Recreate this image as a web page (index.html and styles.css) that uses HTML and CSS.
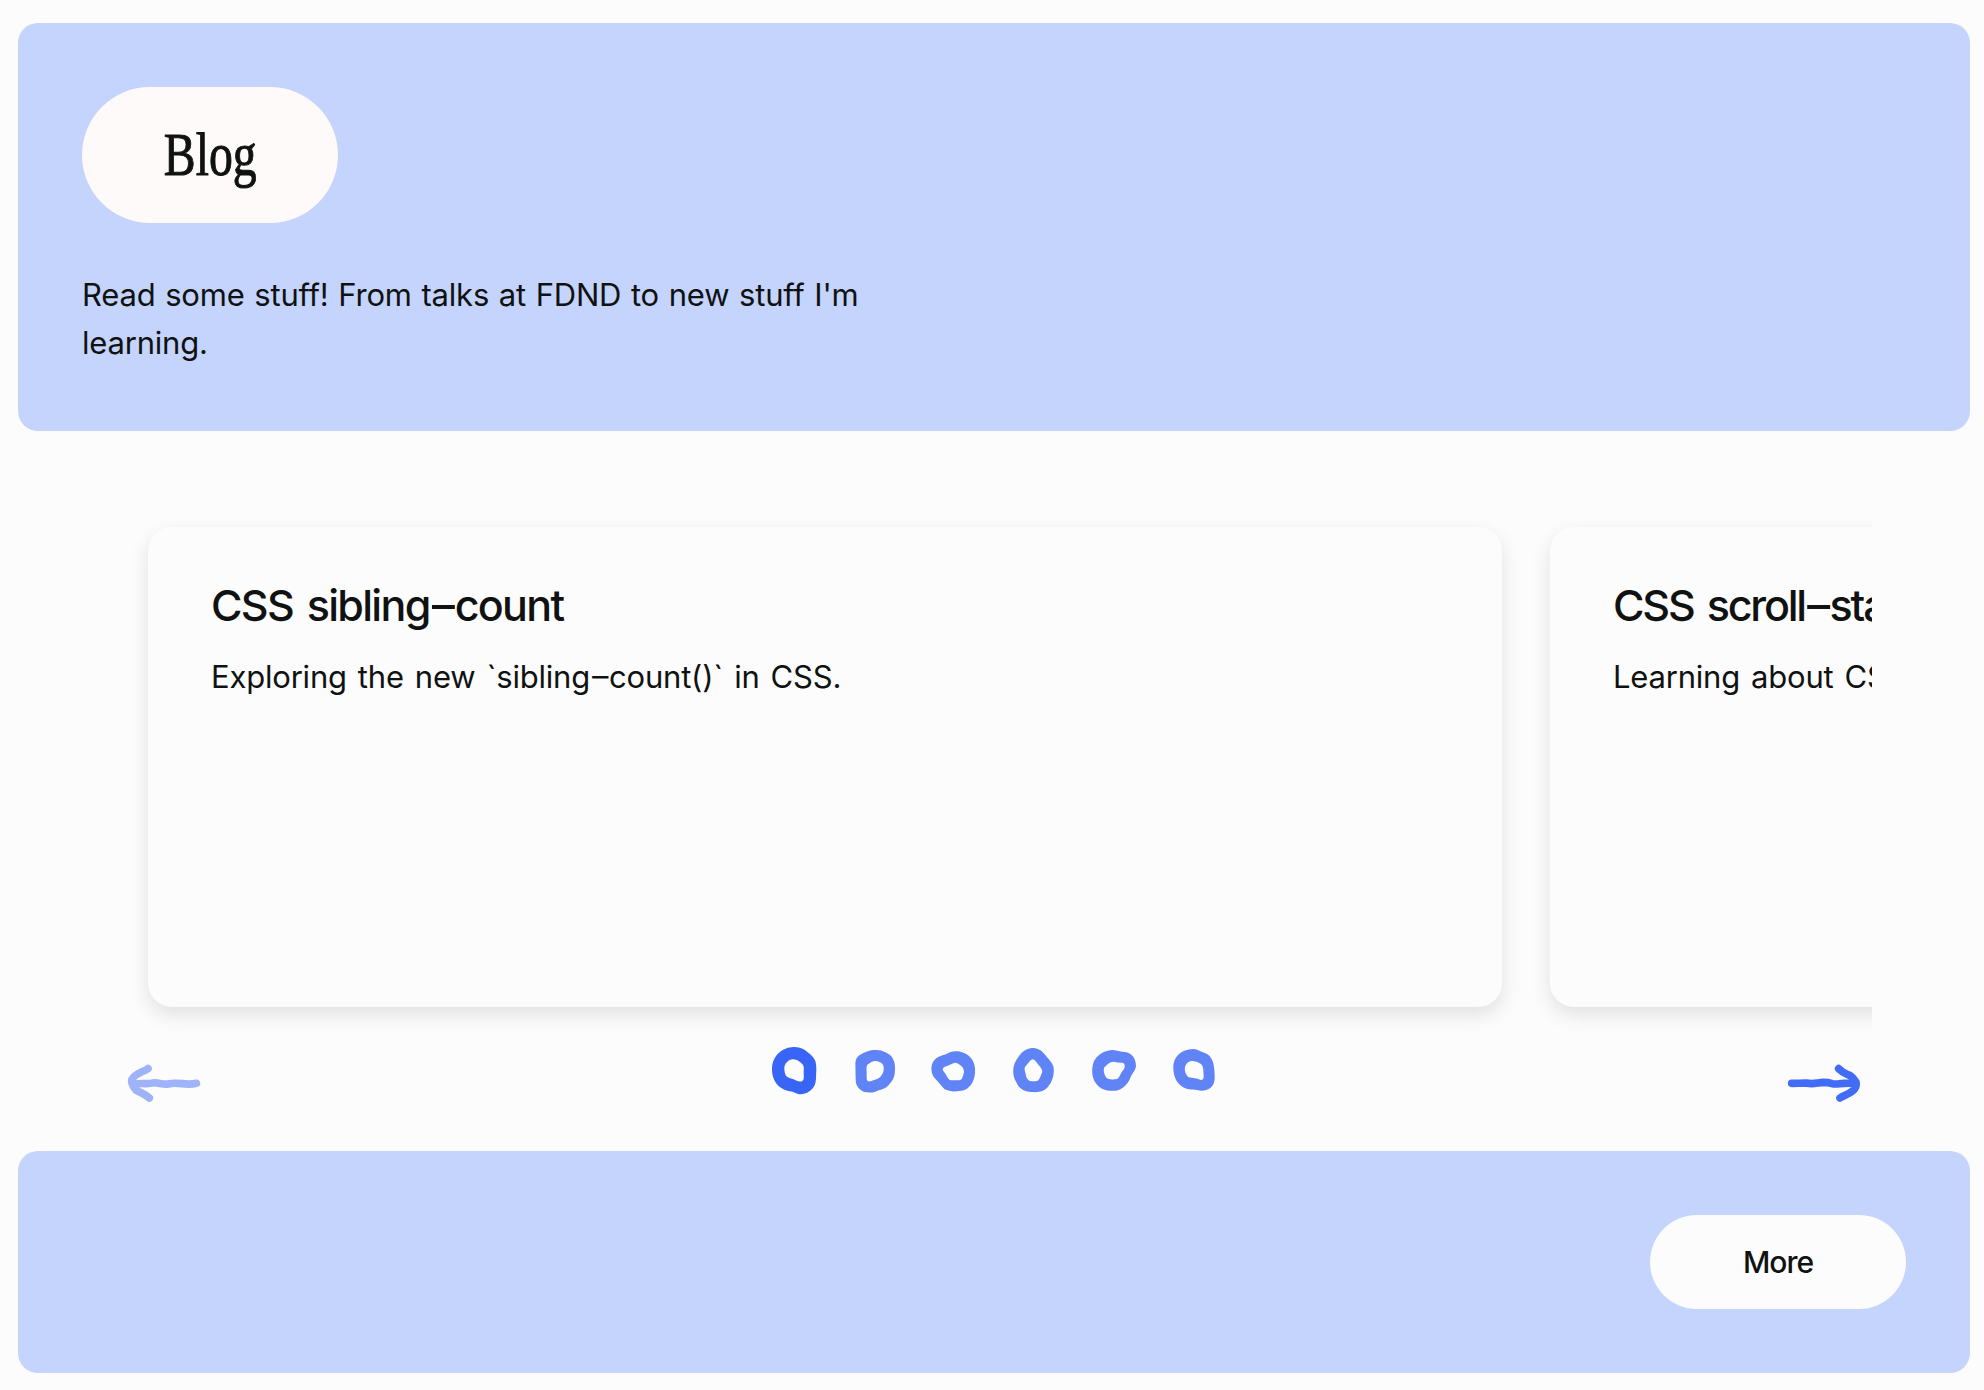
FILE: index.html
```html
<!DOCTYPE html>
<html lang="en">
<head>
<meta charset="utf-8">
<title>Blog</title>
<link rel="stylesheet" href="styles.css">
</head>
<body>
<header class="hero">
  <h1 class="pill hero-title"><span class="hero-word">Blog</span></h1>
  <p class="intro">Read some stuff! From talks at FDND to new stuff I'm learning.</p>
</header>
<main class="posts">
  <div class="track">
    <article class="card">
      <h2 class="card-title">CSS sibling<span class="dash">-</span>count</h2>
      <p class="card-text">Exploring the new `sibling<span class="dash">-</span>count()` in CSS.</p>
    </article>
    <article class="card">
      <h2 class="card-title scroll-title">CSS scroll<span class="dash">-</span>state</h2>
      <p class="card-text">Learning about CSS</p>
    </article>
  </div>
  <nav class="controls">
    <button class="arrow arrow-off" aria-label="Previous"><svg viewBox="72 210 240 180"><path d="M144 266Q138 271 126 275Q95 289 95 303Q96 317 109 331C126 340 137 343 148 354M102 313C120 308 148 313 158 309S190 315 204 312Q220 308 246 311T289 310"/></svg></button>
    <div class="dots">
      <svg class="on" viewBox="-18 0 240 240"><path d="M100 51C126 50 139 63 153 75C168 89 169 100 169 122C167 141 171 157 159 174C145 190 127 196 112 191Q98 184 82 182C54 174 36 150 36 119C35 91 50 71 68 60Q83 51 100 51ZM100 88C87 87 72 101 73 117Q74 137 82 141Q94 146 101 148C108 151 116 157 126 154C134 149 131 137 131 126C132 110 133 108 123 98Q111 88 100 88Z"/></svg>
      <svg viewBox="222 0 240 240"><path d="M345 60Q363 59 376 67C396 75 407 93 405 119Q405 144 391 159C377 180 359 178 346 185C318 193 295 183 288 160C286 143 287 119 286 100C287 77 306 70 319 65Q332 59 345 60ZM347 93C335 93 330 100 322 104C317 113 321 124 320 136C320 151 320 156 332 154C343 148 356 149 363 138Q373 126 371 111C369 99 361 95 347 93Z"/></svg>
      <svg viewBox="462 0 240 240"><path d="M584 64C602 62 619 70 630 81C642 93 647 110 645 128C644 147 635 166 621 176Q611 183 597 183C583 186 566 184 553 177C540 163 534 155 522 142C513 128 512 109 518 98C527 80 544 78 559 72Q571 65 584 64ZM588 98C576 99 570 105 559 109C545 113 546 120 554 128C561 137 563 148 573 151H597C608 150 608 139 612 127C613 113 602 104 588 98Z"/></svg>
      <svg viewBox="-18 0 240 240"><path d="M95 54C110 54 122 58 131 70C141 83 154 93 160 109C164 127 159 153 145 169C131 188 112 187 94 186C73 185 58 178 49 157C36 136 37 110 48 92C58 77 68 57 95 54ZM98 88C90 90 87 97 79 106C70 115 75 122 77 133C78 143 83 149 88 152Q101 155 113 152C121 146 121 137 126 128C130 116 117 109 109 96Q104 88 98 88Z"/></svg>
      <svg viewBox="222 0 240 240"><path d="M339 60Q352 62 366 65C393 65 408 82 408 109C406 124 395 131 391 144C382 164 367 180 347 182C325 184 303 181 290 163C275 146 274 118 280 99C287 76 315 60 339 60ZM341 95C328 95 321 105 313 112C309 121 312 132 318 142C324 150 340 149 352 147C363 137 360 129 371 119C376 110 376 99 366 98Q353 98 341 95Z"/></svg>
      <svg viewBox="462 0 240 240"><path d="M579 57C592 56 603 66 615 69C636 78 641 97 643 119C644 142 648 160 630 175C617 184 603 183 591 180C576 178 557 179 543 167C526 154 519 132 520 107C522 84 536 69 553 62Q567 57 579 57ZM578 93C566 93 560 99 556 108C552 120 556 133 566 142C577 145 591 144 602 150C614 151 611 138 610 123Q610 107 602 101Q590 94 578 93Z"/></svg>
    </div>
    <button class="arrow" aria-label="Next"><svg viewBox="132 210 240 180"><path d="M296 266C304 274 312 279 324 284Q336 287 348 307Q350 317 345 325C334 341 314 344 300 354M155 310Q178 310 198 309C221 314 231 308 251 307Q263 307 277 311C293 315 302 307 342 310"/></svg></button>
  </nav>
</main>
<footer class="more-bar"><a class="pill more">More</a></footer>
</body>
</html>
```
FILE: styles.css
```css
* { box-sizing: border-box; margin: 0; }
body { background: #fcfcfc; color: #101212; padding: 23px 14px 17px 18px; font-family: Inter, sans-serif; font-size: 32px; line-height: 48px; }
.hero, .more-bar { background: #c5d4fc; border-radius: 20px; padding: 64px; }
.hero { height: 408px; display: flex; flex-direction: column; align-items: flex-start; gap: 48px; }
.pill { width: 256px; display: flex; align-items: center; justify-content: center; }
.hero-title { height: 136px; padding-bottom: 3px; background: #fffafa; border-radius: 68px; font: 400 62px/80px "Liberation Serif", serif; }
.hero-word { display: block; transform: scaleX(.77); -webkit-text-stroke: 1px; }
.intro { width: 800px; font-size: 31px; letter-spacing: -.2px; word-spacing: 1.2px; }
.posts { height: 720px; padding: 96px 98px 0 99px; }
.track { height: 480px; display: flex; gap: 48px; padding-left: 31px; overflow-x: clip; }
.card { flex: 0 0 1354px; padding: 48px 63px; border-radius: 24px; background: #fcfcfc; box-shadow: 0 8px 20px rgba(0, 0, 0, .11); white-space: nowrap; }
.card-title { font-size: 43px; line-height: 60px; font-weight: 500; margin-bottom: 18px; letter-spacing: -1.7px; word-spacing: 4px; }
.scroll-title { letter-spacing: -2.2px; }
.card-text { font-size: 31px; letter-spacing: -.2px; word-spacing: 2.5px; }
.dash { display: inline-block; margin: 0 .08em; transform: translateY(-.03em) scaleX(1.65); }
.controls { margin-top: 23px; padding: 0 8px 0 7px; height: 80px; display: flex; justify-content: space-between; align-items: center; }
.arrow { width: 80px; height: 60px; margin-top: 20px; padding: 0; border: 0; background: none; }
.arrow svg { display: block; width: 80px; height: 60px; fill: none; stroke: #426cf5; stroke-width: 23; stroke-linecap: round; stroke-linejoin: round; }
.arrow-off { opacity: .5; }
.dots { display: flex; fill: #6083f5; fill-rule: evenodd; }
.dots svg { width: 80px; height: 80px; }
.dots .on { fill: #3865f5; }
.more-bar { height: 222px; display: flex; justify-content: flex-end; }
.more { height: 94px; border-radius: 47px; background: #fcfcfc; font-size: 30px; font-weight: 500; letter-spacing: -1px; }
```
